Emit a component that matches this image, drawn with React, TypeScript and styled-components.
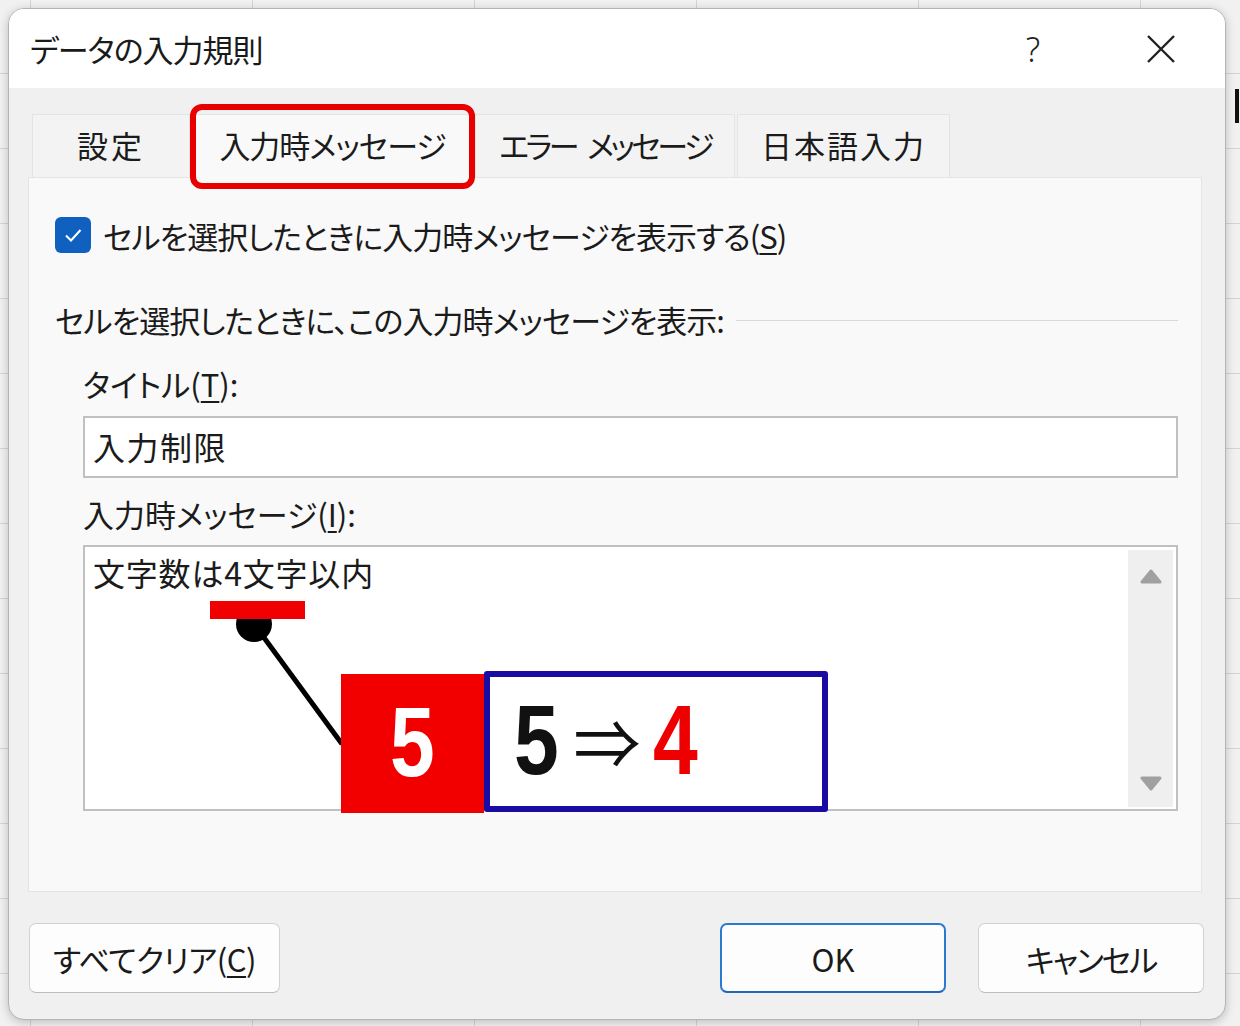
import React from "react";
import styled, { createGlobalStyle } from "styled-components";

const Global = createGlobalStyle`
  html, body { margin: 0; padding: 0; }
  body {
    font-family: "Noto Sans CJK JP", "Noto Sans", sans-serif;
    color: #1b1b1b;
  }
`;

const Page = styled.div`
  position: relative;
  width: 1240px;
  height: 1026px;
  box-sizing: border-box;
  padding: 8px 0 0 8px;
  overflow: hidden;
  background-color: #f1f1f1;
  background-image:
    linear-gradient(#d4d4d4 1px, transparent 1px),
    linear-gradient(90deg, #d4d4d4 1px, transparent 1px);
  background-size: 222px 75px;
  background-position: 30px 73px;
`;

const CellMark = styled.div`
  position: absolute;
  left: 1235px;
  top: 89px;
  width: 4px;
  height: 34px;
  background: #111;
`;

const Dialog = styled.div`
  position: relative;
  z-index: 1;
  width: 1218px;
  height: 1012px;
  box-sizing: border-box;
  border: 1px solid #b4b4b4;
  border-radius: 16px;
  overflow: hidden;
  background: #f0f0f0;
  box-shadow: 0 2px 10px rgba(0, 0, 0, 0.22);
  display: flex;
  flex-direction: column;
  font-feature-settings: "palt";
`;

const TitleBar = styled.div`
  height: 79px;
  flex: none;
  background: #ffffff;
  display: flex;
  align-items: center;
  padding-left: 21px;
`;

const TitleText = styled.div`
  font-size: 31px;
  color: #1a1a1a;
  letter-spacing: -1px;
`;

const TitleControls = styled.div`
  margin-left: auto;
  display: flex;
  height: 100%;
`;

const TitleButton = styled.div`
  width: 128px;
  height: 100%;
  display: flex;
  align-items: center;
  justify-content: center;
  font-family: "Noto Sans", sans-serif;
  font-weight: 300;
  font-size: 34px;
  color: #222;
`;

const Body = styled.div`
  flex: 1;
  display: flex;
  flex-direction: column;
  padding: 26px 23px 0 19px;
`;

const TabRow = styled.div`
  display: flex;
  gap: 2px;
  padding-left: 4px;
  height: 63px;
  position: relative;
  z-index: 2;
`;

const Tab = styled.div<{ $w: number; $ls: number; $active?: boolean }>`
  position: relative;
  width: ${(p) => p.$w}px;
  height: ${(p) => (p.$active ? 64 : 63)}px;
  box-sizing: border-box;
  display: flex;
  align-items: center;
  justify-content: center;
  gap: 11px;
  font-size: 31px;
  letter-spacing: ${(p) => p.$ls}px;
  background: ${(p) => (p.$active ? "#f9f9f9" : "#f3f3f3")};
  border: 1px solid #e4e4e4;
  border-bottom: none;
  padding-bottom: 4px;
`;

const RedFrame = styled.div`
  position: absolute;
  top: -11px;
  left: -3px;
  right: -3px;
  bottom: -11px;
  border: 6px solid #e80000;
  border-radius: 12px;
  pointer-events: none;
`;

const Panel = styled.div`
  height: 715px;
  box-sizing: border-box;
  background: #f9f9f9;
  border: 1px solid #e4e4e4;
  padding: 39px 23px 0 26px;
  display: flex;
  flex-direction: column;
`;

const CheckRow = styled.div`
  display: flex;
  align-items: center;
  gap: 12px;
  height: 36px;
  font-size: 31px;
  letter-spacing: -1px;
`;

const CheckBox = styled.div`
  width: 36px;
  height: 36px;
  border-radius: 6px;
  background: #1060c0;
  display: flex;
  align-items: center;
  justify-content: center;
`;

const U = styled.span`
  text-decoration: underline;
  text-underline-offset: 4px;
  text-decoration-thickness: 2px;
`;

const GroupRow = styled.div`
  margin-top: 46px;
  display: flex;
  align-items: center;
  gap: 12px;
  height: 40px;
  font-size: 31px;
  letter-spacing: -1px;
`;

const GroupLine = styled.div`
  flex: 1;
  height: 1px;
  background: #d8d8d8;
  margin-top: 2px;
`;

const Fields = styled.div`
  padding-left: 28px;
  display: flex;
  flex-direction: column;
`;

const FieldLabel = styled.div<{ $mt: number }>`
  margin-top: ${(p) => p.$mt}px;
  height: 40px;
  line-height: 40px;
  font-size: 31px;
`;

const TextInput = styled.div`
  margin-top: 12px;
  height: 62px;
  box-sizing: border-box;
  background: #ffffff;
  border: 2px solid #c0c0c0;
  display: flex;
  align-items: center;
  padding: 0 0 2px 8px;
  font-size: 32px;
  letter-spacing: 1.5px;
`;

const TextArea = styled.div`
  position: relative;
  margin-top: 11px;
  height: 266px;
  box-sizing: border-box;
  background: #ffffff;
  border: 2px solid #c0c0c0;
  display: flex;
`;

const AreaText = styled.div`
  flex: 1;
  padding: 5px 0 0 8px;
  line-height: 40px;
  font-size: 32px;
  letter-spacing: 0.8px;
`;

const ScrollBar = styled.div`
  width: 45px;
  margin: 3px 3px 2px 0;
  background: #efefef;
  display: flex;
  flex-direction: column;
  align-items: center;
  justify-content: space-between;
  padding: 19px 0 16px;
  box-sizing: border-box;
`;

const Overlay = styled.svg`
  position: absolute;
  left: 0;
  top: 0;
  pointer-events: none;
`;

const RedBar = styled.div`
  position: absolute;
  left: 125px;
  top: 54px;
  width: 95px;
  height: 18px;
  background: #f00000;
`;

const RedBox = styled.div`
  position: absolute;
  left: 256px;
  top: 127px;
  width: 143px;
  height: 139px;
  background: #f20000;
  display: flex;
  align-items: center;
  justify-content: center;
  padding-bottom: 4px;
  box-sizing: border-box;
`;

const BlueBox = styled.div`
  position: absolute;
  left: 399px;
  top: 124px;
  width: 344px;
  height: 141px;
  box-sizing: border-box;
  border: 6px solid #1a0ba3;
  border-radius: 3px;
  background: #ffffff;
  display: flex;
  align-items: center;
  padding: 0 0 4px 24px;
`;

const Num = styled.span<{ $color: string; $center?: boolean }>`
  display: inline-block;
  font-family: "Liberation Sans", "Arimo", sans-serif;
  font-weight: 700;
  font-size: 98px;
  line-height: 1;
  color: ${(p) => p.$color};
  transform: scaleX(0.82);
  transform-origin: ${(p) => (p.$center ? "center" : "left")};
  margin-right: ${(p) => (p.$center ? 0 : -10)}px;
`;

const Arrow = styled.span`
  font-family: "Noto Sans CJK JP", sans-serif;
  font-size: 67px;
  line-height: 1;
  color: #111;
  margin: 0 12px 0 15px;
  font-feature-settings: normal;
`;

const ButtonRow = styled.div`
  margin-top: 31px;
  display: flex;
  gap: 32px;
  margin-right: -2px;
  margin-left: 1px;
`;

const Button = styled.div<{ $w: number; $ls?: number; $primary?: boolean }>`
  width: ${(p) => p.$w}px;
  height: 70px;
  box-sizing: border-box;
  background: #fdfdfd;
  border: ${(p) => (p.$primary ? "2px solid #2a7ad0" : "1px solid #d2d2d2")};
  border-bottom-color: ${(p) => (p.$primary ? "#1f68b8" : "#bcbcbc")};
  border-radius: 7px;
  display: flex;
  align-items: center;
  justify-content: center;
  font-size: 31px;
  letter-spacing: ${(p) => p.$ls ?? 0}px;
  color: #1a1a1a;
`;

const Spacer = styled.div`
  flex: 1;
`;

const ArrowIcon = ({ down }: { down?: boolean }) => (
  <svg width="22" height="15" viewBox="0 0 22 15">
    <path
      d={down ? "M2 2 L20 2 L11 13 Z" : "M2 13 L20 13 L11 2 Z"}
      fill="#a0a0a0"
      stroke="#a0a0a0"
      strokeWidth="3"
      strokeLinejoin="round"
    />
  </svg>
);

export default function App() {
  return (
    <Page>
      <Global />
      <CellMark />
      <Dialog>
        <TitleBar>
          <TitleText>データの入力規則</TitleText>
          <TitleControls>
            <TitleButton>?</TitleButton>
            <TitleButton>
              <svg width="30" height="30" viewBox="0 0 30 30">
                <path d="M2 2 L28 28 M28 2 L2 28" stroke="#222" strokeWidth="2.4" />
              </svg>
            </TitleButton>
          </TitleControls>
        </TitleBar>
        <Body>
          <TabRow>
            <Tab $w={158} $ls={3}>設定</Tab>
            <Tab $w={281} $ls={-1} $active>
              入力時メッセージ
              <RedFrame />
            </Tab>
            <Tab $w={260} $ls={-3.5}>
              <span>エラー</span>
              <span>メッセージ</span>
            </Tab>
            <Tab $w={213} $ls={2}>日本語入力</Tab>
          </TabRow>
          <Panel>
            <CheckRow>
              <CheckBox>
                <svg width="22" height="22" viewBox="0 0 22 22">
                  <path d="M4 11.5 L9 16.5 L18.5 6" fill="none" stroke="#fff" strokeWidth="2" />
                </svg>
              </CheckBox>
              <span>
                セルを選択したときに入力時メッセージを表示する(<U>S</U>)
              </span>
            </CheckRow>
            <GroupRow>
              <span>セルを選択したときに、この入力時メッセージを表示:</span>
              <GroupLine />
            </GroupRow>
            <Fields>
              <FieldLabel $mt={25}>
                タイトル(<U>T</U>):
              </FieldLabel>
              <TextInput>入力制限</TextInput>
              <FieldLabel $mt={16}>
                入力時メッセージ(<U>I</U>):
              </FieldLabel>
              <TextArea>
                <AreaText>文字数は4文字以内</AreaText>
                <ScrollBar>
                  <ArrowIcon />
                  <ArrowIcon down />
                </ScrollBar>
                <Overlay width="400" height="266" viewBox="0 0 400 266">
                  <line x1="169" y1="77" x2="257" y2="197" stroke="#000" strokeWidth="5" />
                  <circle cx="169" cy="77" r="18" fill="#000" />
                </Overlay>
                <RedBar />
                <RedBox>
                  <Num $color="#ffffff" $center>5</Num>
                </RedBox>
                <BlueBox>
                  <Num $color="#111111">5</Num>
                  <Arrow>⇒</Arrow>
                  <Num $color="#ee0000">4</Num>
                </BlueBox>
              </TextArea>
            </Fields>
          </Panel>
          <ButtonRow>
            <Button $w={251} $ls={-0.5}>
              すべてクリア(<U>C</U>)
            </Button>
            <Spacer />
            <Button $w={226} $primary>
              OK
            </Button>
            <Button $w={226} $ls={-2}>
              キャンセル
            </Button>
          </ButtonRow>
        </Body>
      </Dialog>
    </Page>
  );
}
